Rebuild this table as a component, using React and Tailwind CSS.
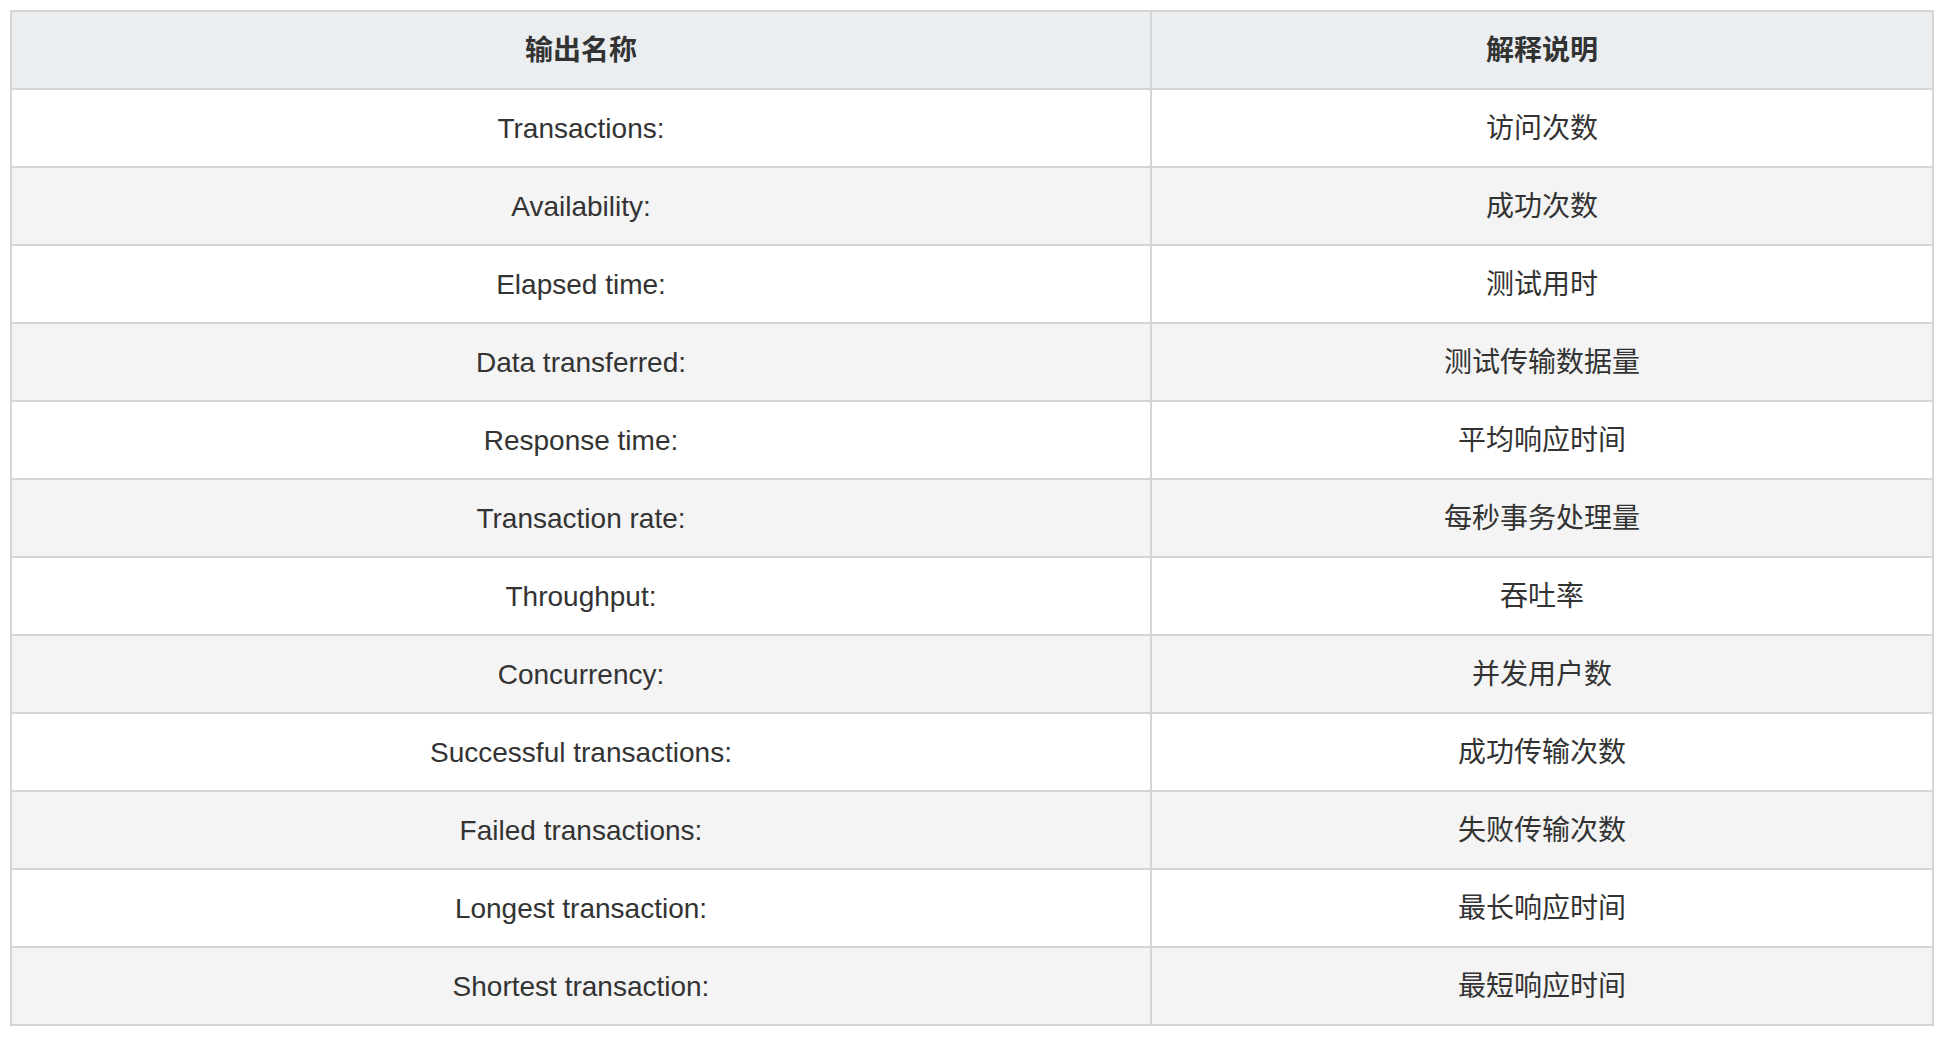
import React from "react";

const rows = [
  ["Transactions:", "访问次数"],
  ["Availability:", "成功次数"],
  ["Elapsed time:", "测试用时"],
  ["Data transferred:", "测试传输数据量"],
  ["Response time:", "平均响应时间"],
  ["Transaction rate:", "每秒事务处理量"],
  ["Throughput:", "吞吐率"],
  ["Concurrency:", "并发用户数"],
  ["Successful transactions:", "成功传输次数"],
  ["Failed transactions:", "失败传输次数"],
  ["Longest transaction:", "最长响应时间"],
  ["Shortest transaction:", "最短响应时间"],
];

function App() {
  return (
    <div
      className="min-h-screen bg-white p-[10px] text-[#333333]"
      style={{ fontFamily: '"Liberation Sans", "Noto Sans CJK SC", sans-serif' }}
    >
      <table className="w-[1924px] table-fixed border-collapse text-[28px] leading-[32px]">
        <colgroup>
          <col className="w-[1140px]" />
          <col />
        </colgroup>
        <thead>
          <tr className="bg-[#ebeef1]">
            <th className="h-[78px] border-2 border-[#d5d5d5] p-0 pt-[2px] text-center font-bold">输出名称</th>
            <th className="h-[78px] border-2 border-[#d5d5d5] p-0 pt-[2px] text-center font-bold">解释说明</th>
          </tr>
        </thead>
        <tbody>
          {rows.map(([name, desc], i) => (
            <tr key={name} className={i % 2 === 1 ? "bg-[#f4f4f4]" : "bg-white"}>
              <td className="h-[78px] border-2 border-[#d5d5d5] p-0 pt-[2px] text-center">{name}</td>
              <td className="h-[78px] border-2 border-[#d5d5d5] p-0 pt-[2px] text-center">{desc}</td>
            </tr>
          ))}
        </tbody>
      </table>
    </div>
  );
}

export default App;
